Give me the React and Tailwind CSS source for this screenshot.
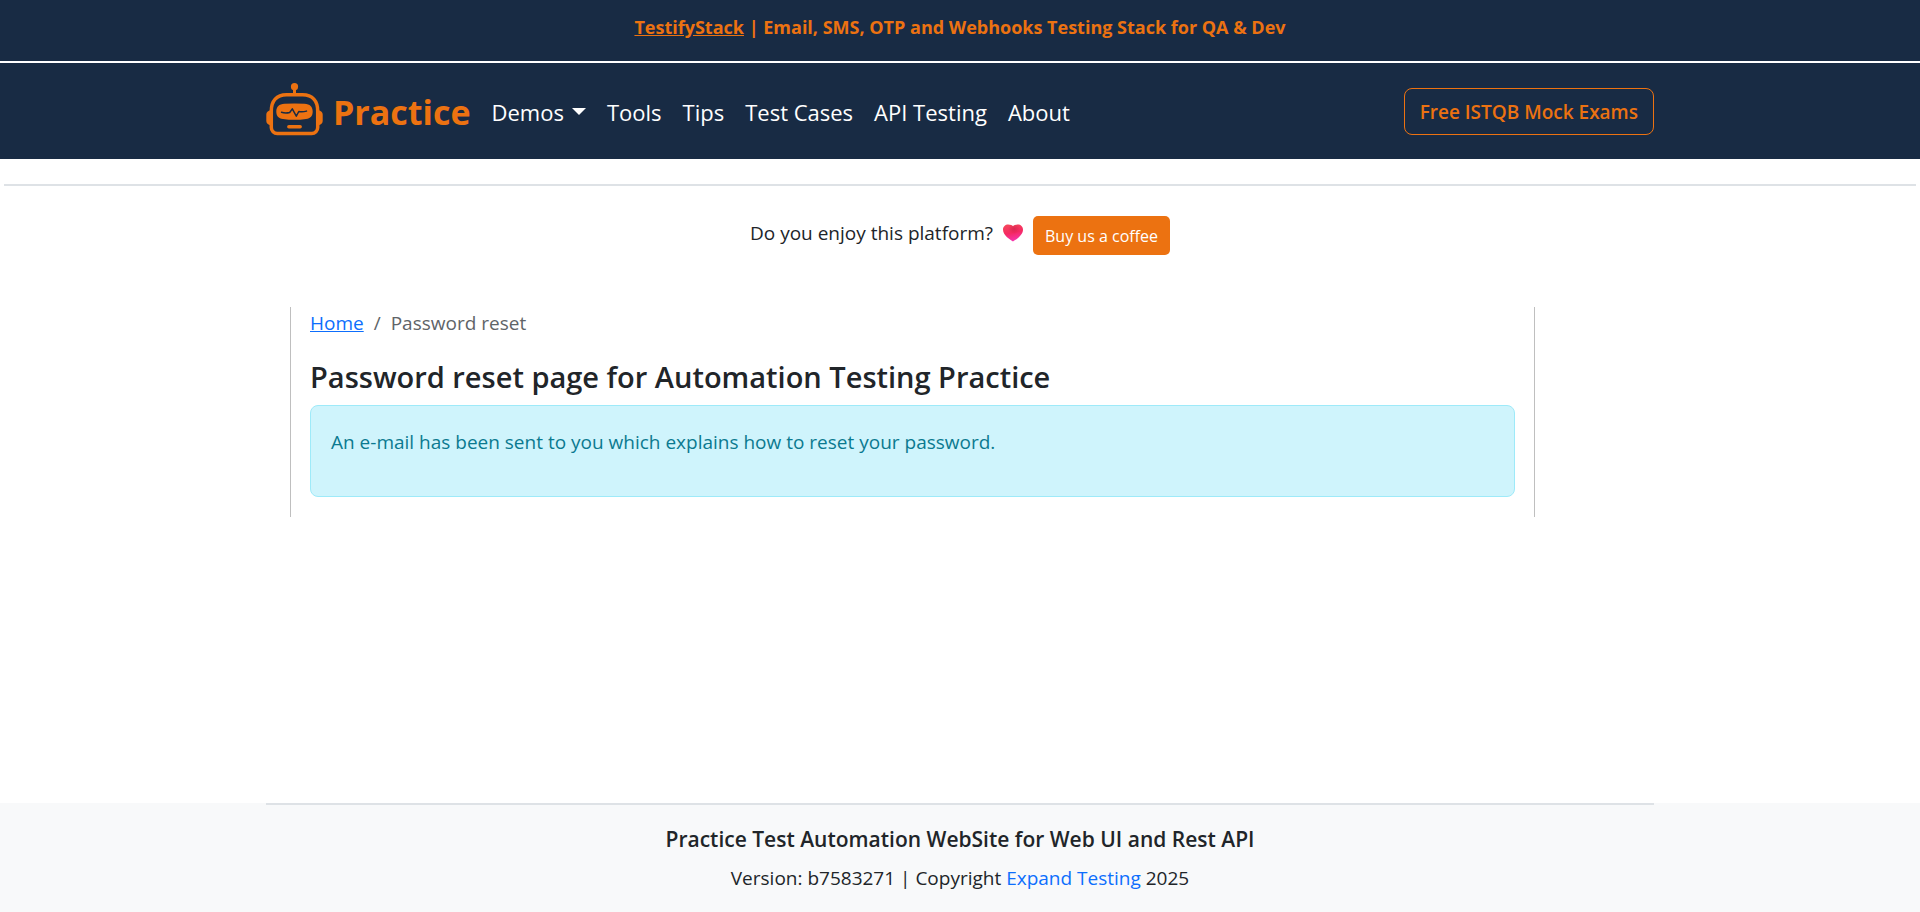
const NAV = ["Tools", "Tips", "Test Cases", "API Testing", "About"];

function RobotLogo() {
  return (
    <svg viewBox="0 0 57 53" className="mb-1 h-[53px] w-[57px] shrink-0" fill="none" aria-hidden="true">
      <circle cx="28.5" cy="3.700" r="3.600" fill="#ec7211" />
      <path d="M28.5 5v6" stroke="#ec7211" strokeWidth="3" />
      <path
        d="M20.500 11.700h16C46.500 11.700 51.700 18 51.700 28v16.500a6 6 0 0 1-6 6H11.300a6 6 0 0 1-6-6V28C5.300 18 10.500 11.700 20.500 11.700z"
        stroke="#ec7211"
        strokeWidth="3.500"
      />
      <path d="M5 27C1.800 27.600.3 29.300.3 31.500v6.500c0 2.300 1.500 3.800 4.700 4.300zM52 27c3.200.6 4.700 2.300 4.700 4.500v6.500c0 2.300-1.500 3.800-4.700 4.300z" fill="#ec7211" />
      <path
        d="M18.500 20.800Q28.500 20 38.500 20.800C44 21 46.700 24 46.700 28.500S44.500 35.500 40 35.900Q28.500 37.800 17 35.900C12.500 35.500 10.300 33 10.300 28.500S13 21 18.500 20.800z"
        fill="#ec7211"
      />
      <path d="M15.500 29.300q4 1.300 8.200.2l2.600-3.600 4 7.200 2.500-4.600q3.500.8 7.700-.4" stroke="#182b44" strokeWidth="1.500" strokeLinecap="round" strokeLinejoin="round" />
      <path d="M22.800 43.700h11.400" stroke="#ec7211" strokeWidth="3.400" strokeLinecap="round" />
    </svg>
  );
}

function Heart() {
  return (
    <svg viewBox="0 0 20 18" className="h-[18px] w-5" role="img" aria-label="Heart">
      <defs>
        <linearGradient id="heart" x1="0.3" y1="0" x2="0.55" y2="1">
          <stop offset="0" stopColor="#f5475c" />
          <stop offset="0.5" stopColor="#f52a62" />
          <stop offset="1" stopColor="#f635b4" />
        </linearGradient>
        <radialGradient id="heartShade" cx="0.55" cy="0.25" r="0.3">
          <stop offset="0" stopColor="#b3123c" stopOpacity="0.4" />
          <stop offset="1" stopColor="#b3123c" stopOpacity="0" />
        </radialGradient>
      </defs>
      <path d="M10 17.500C7.500 16 0 11.500 0 5.800 0 2.500 2.300.5 5.200.5 7.500.5 9.200 1.300 10 2.300 10.800 1.300 12.500.5 14.800.5 17.700.5 20 2.500 20 5.800 20 11.500 12.500 16 10 17.500z" fill="url(#heart)" />
      <path d="M10 17.500C7.500 16 0 11.500 0 5.800 0 2.500 2.300.5 5.200.5 7.500.5 9.200 1.300 10 2.300 10.800 1.300 12.500.5 14.800.5 17.700.5 20 2.500 20 5.800 20 11.500 12.500 16 10 17.500z" fill="url(#heartShade)" />
    </svg>
  );
}

export default function App() {
  return (
    <div className="flex min-h-screen flex-col bg-white font-['Open_Sans','Noto_Sans',sans-serif] text-[19px] leading-[30px] text-[#212529]">
      <header>
        <div className="flex h-[61px] justify-center bg-[#182b44] pt-3 text-lg leading-[30px] font-bold text-[#ec7211]">
          <p>
            <a href="#testifystack" className="underline">TestifyStack</a> | Email, SMS, OTP and Webhooks Testing Stack for QA &amp; Dev
          </p>
        </div>
        <nav className="mt-0.5 bg-[#182b44]">
          <div className="mx-auto flex h-24 max-w-[1388px] items-center pt-px">
            <a href="#home" className="flex items-center gap-2.5 text-[34px] font-bold text-[#ec7211]">
              <RobotLogo />
              Practice
            </a>
            <div className="ml-[21px] flex items-center gap-[21px] text-[22px] text-white">
              <button type="button" className="flex items-center gap-2">
                Demos
                <svg viewBox="0 0 14 7" className="h-[7px] w-3.5" aria-hidden="true">
                  <path d="M0 0h14L7 7z" fill="#fff" />
                </svg>
              </button>
              {NAV.map((item) => (
                <a key={item} href="#nav">{item}</a>
              ))}
            </div>
            <a href="#exams" className="ml-auto flex h-[47px] items-center rounded-lg border border-[#ec7211] px-[15px] font-semibold text-[#ec7211]">
              Free ISTQB Mock Exams
            </a>
          </div>
        </nav>
      </header>

      <hr className="mx-1 mt-[25px] border-t-2 border-[#dee2e6]" />

      <div className="mt-[30px] flex justify-center gap-2.5">
        <p className="flex items-center gap-2.5 pb-[5px]">
          Do you enjoy this platform?
          <Heart />
        </p>
        <a href="#coffee" className="flex h-[39px] items-center rounded-[5px] bg-[#ec7211] px-3 text-base text-white">
          Buy us a coffee
        </a>
      </div>

      <main className="mx-auto mt-[52px] w-full max-w-[1388px] grow px-6">
        <div className="mr-[95px] border-x border-[#bfbfbf] px-[19px] pb-5">
          <nav aria-label="Breadcrumb">
            <ol className="flex gap-2.5 pt-px">
              <li><a href="#home" className="text-[#0d6efd] underline">Home</a></li>
              <li aria-hidden="true" className="text-[#606468]">/</li>
              <li className="text-[#606468]">Password reset</li>
            </ol>
          </nav>
          <h1 className="mt-[21px] text-[29px] leading-9 font-semibold">Password reset page for Automation Testing Practice</h1>
          <div role="alert" className="mt-2.5 h-[92px] rounded-lg border border-[#9eeaf9] bg-[#cff4fc] px-5 pt-[21px] text-[#0b7a90]">
            An e-mail has been sent to you which explains how to reset your password.
          </div>
        </div>
      </main>

      <footer className="bg-[#f8f9fa] pb-[19px] text-center">
        <hr className="mx-auto max-w-[1388px] border-t-2 border-[#dee2e6]" />
        <h2 className="mt-[19px] text-[21px] font-semibold">Practice Test Automation WebSite for Web UI and Rest API</h2>
        <p className="mt-[9px]">
          Version: b7583271 | Copyright <a href="#expand" className="text-[#0d6efd]">Expand Testing</a> 2025
        </p>
      </footer>
    </div>
  );
}
